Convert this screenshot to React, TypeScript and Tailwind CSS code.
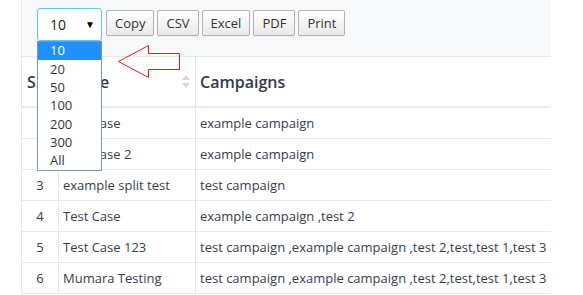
import React from 'react'

const rows = [
  { n: '1', name: 'Test Case', campaigns: 'example campaign' },
  { n: '2', name: 'Test Case 2', campaigns: 'example campaign' },
  { n: '3', name: 'example split test', campaigns: 'test campaign' },
  { n: '4', name: 'Test Case', campaigns: 'example campaign ,test 2' },
  { n: '5', name: 'Test Case 123', campaigns: 'test campaign ,example campaign ,test 2,test,test 1,test 3' },
  { n: '6', name: 'Mumara Testing', campaigns: 'test campaign ,example campaign ,test 2,test,test 1,test 3' },
]

const options = ['10', '20', '50', '100', '200', '300', 'All']

function ExportButton({ label }: { label: string }) {
  return (
    <button className="mt-[2px] h-[26px] px-[8px] rounded-[2px] border border-[#b3b3b3] bg-gradient-to-b from-white to-[#e9e9e9] text-[13px] leading-none text-[#333] shadow-[0_1px_1px_rgba(0,0,0,0.05)]">
      {label}
    </button>
  )
}

function SortIcon() {
  return (
    <svg width="8" height="13" viewBox="0 0 8 13" className="shrink-0">
      <path d="M4 0 L8 5 L0 5 Z" fill="#d4d4d4" />
      <path d="M4 13 L8 8 L0 8 Z" fill="#d4d4d4" />
    </svg>
  )
}

export default function App() {
  return (
    <div className="relative w-[583px] h-[295px] overflow-hidden bg-white font-['Open_Sans',sans-serif] text-[#383c4e]">
      <div className="ml-[21px] w-[530px] border-l border-[#e4e7ed]">
        {/* Toolbar */}
        <div className="h-[57px] bg-[#f8f9fb] border-b border-[#e4e7ed] pl-[15px] pt-[8px] flex items-start gap-[3px]">
          <div className="mr-[1px] w-[65px] h-[33px] rounded-[3px] border border-[#5fc3ea] bg-white flex items-center justify-between pl-[12px] pr-[6px] text-[14px] text-[#222]">
            <span>10</span>
            <span className="text-[10px] text-black">▼</span>
          </div>
          <ExportButton label="Copy" />
          <ExportButton label="CSV" />
          <ExportButton label="Excel" />
          <ExportButton label="PDF" />
          <ExportButton label="Print" />
        </div>

        {/* Header */}
        <div className="flex h-[51px] border-b-2 border-[#e6e9ee] text-[16px] font-semibold text-[#34384f]">
          <div className="w-[37px] border-r border-[#e4e7ed] pl-[5px] flex items-center overflow-hidden whitespace-nowrap">S.No</div>
          <div className="w-[137px] border-r border-[#e4e7ed] pl-[4px] pr-[5px] flex items-center justify-between">
            <span>Name</span>
            <SortIcon />
          </div>
          <div className="flex-1 pl-[4px] flex items-center">Campaigns</div>
        </div>

        {/* Body */}
        {rows.map((r) => (
          <div key={r.n} className="flex h-[31px] border-b border-[#e6e9ee] text-[13px]">
            <div className="w-[37px] border-r border-[#e4e7ed] pt-[2px] flex items-center justify-center">{r.n}</div>
            <div className="w-[137px] border-r border-[#e4e7ed] pt-[2px] pl-[4px] flex items-center whitespace-nowrap">{r.name}</div>
            <div className="flex-1 pt-[2px] pl-[4px] flex items-center whitespace-nowrap">{r.campaigns}</div>
          </div>
        ))}
      </div>

      {/* Open select list */}
      <div className="absolute left-[37px] top-[41px] w-[65px] border border-[#7d96b0] bg-white text-[13px] text-[#333]">
        {options.map((o, i) => (
          <div
            key={o}
            className={`h-[18.3px] pl-[12px] flex items-center ${i === 0 ? 'bg-[#1e90ff] text-white' : ''}`}
          >
            {o}
          </div>
        ))}
      </div>

      {/* Annotation arrow */}
      <svg className="absolute left-0 top-0" width="583" height="295">
        <polygon
          points="118.5,61.5 148.5,45.5 148.5,53.5 179.5,53.5 179.5,69.5 148.5,69.5 148.5,77.5"
          fill="none"
          stroke="#e8161c"
          strokeWidth="1"
        />
      </svg>
    </div>
  )
}
